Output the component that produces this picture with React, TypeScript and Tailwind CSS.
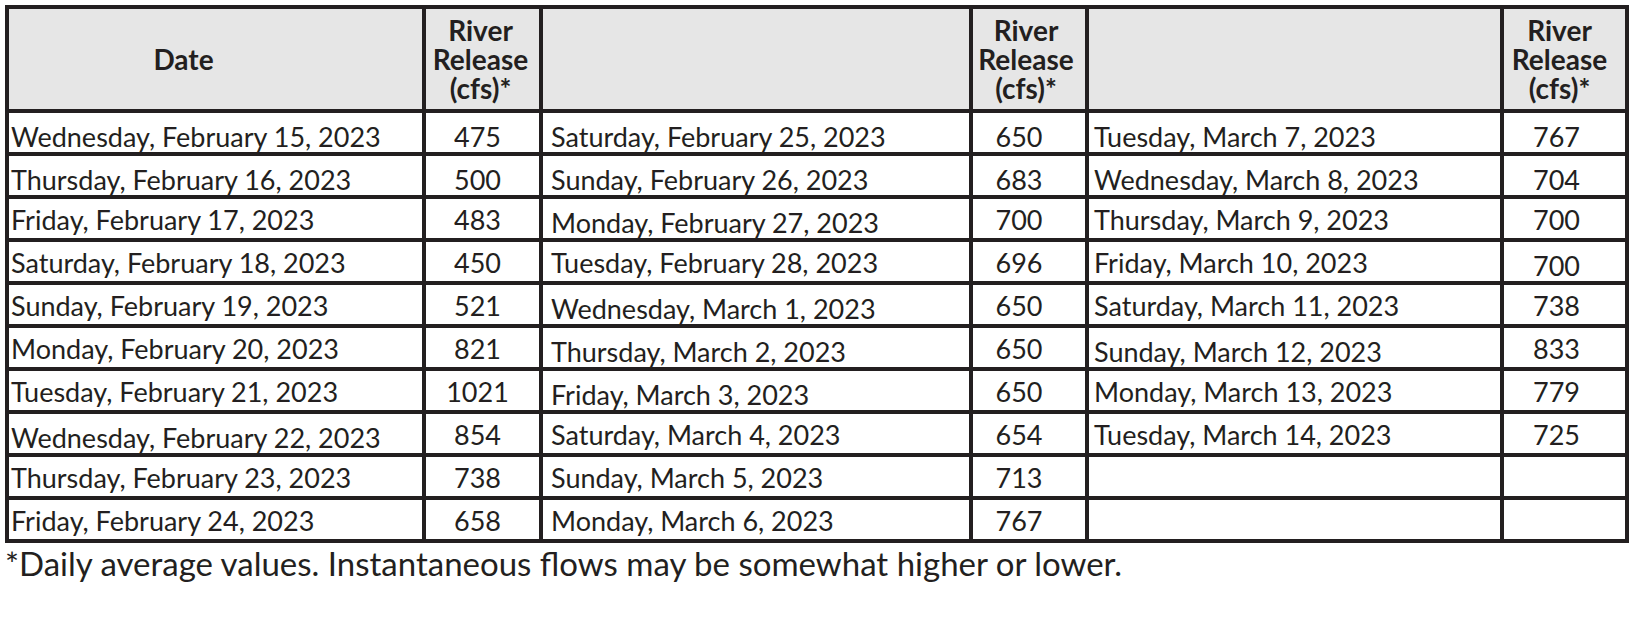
import React from "react";

// o: how many px lower than normal the text sits (0, 3 or 6)
type Cell = { d: string; v: string; od?: number; ov?: number };

const rows: { off: number; cells: Cell[] }[] = [
  {
    off: 3,
    cells: [
      { d: "Wednesday, February 15, 2023", v: "475" },
      { d: "Saturday, February 25, 2023", v: "650" },
      { d: "Tuesday, March 7, 2023", v: "767" },
    ],
  },
  {
    off: 3,
    cells: [
      { d: "Thursday, February 16, 2023", v: "500" },
      { d: "Sunday, February 26, 2023", v: "683" },
      { d: "Wednesday, March 8, 2023", v: "704" },
    ],
  },
  {
    off: 0,
    cells: [
      { d: "Friday, February 17, 2023", v: "483" },
      { d: "Monday, February 27, 2023", v: "700", od: 3 },
      { d: "Thursday, March 9, 2023", v: "700" },
    ],
  },
  {
    off: 0,
    cells: [
      { d: "Saturday, February 18, 2023", v: "450" },
      { d: "Tuesday, February 28, 2023", v: "696" },
      { d: "Friday, March 10, 2023", v: "700", ov: 3 },
    ],
  },
  {
    off: 0,
    cells: [
      { d: "Sunday, February 19, 2023", v: "521" },
      { d: "Wednesday, March 1, 2023", v: "650", od: 3 },
      { d: "Saturday, March 11, 2023", v: "738" },
    ],
  },
  {
    off: 0,
    cells: [
      { d: "Monday, February 20, 2023", v: "821" },
      { d: "Thursday, March 2, 2023", v: "650", od: 3 },
      { d: "Sunday, March 12, 2023", v: "833", od: 3 },
    ],
  },
  {
    off: 0,
    cells: [
      { d: "Tuesday, February 21, 2023", v: "1021" },
      { d: "Friday, March 3, 2023", v: "650", od: 3 },
      { d: "Monday, March 13, 2023", v: "779" },
    ],
  },
  {
    off: 0,
    cells: [
      { d: "Wednesday, February 22, 2023", v: "854", od: 3 },
      { d: "Saturday, March 4, 2023", v: "654" },
      { d: "Tuesday, March 14, 2023", v: "725" },
    ],
  },
  {
    off: 0,
    cells: [
      { d: "Thursday, February 23, 2023", v: "738" },
      { d: "Sunday, March 5, 2023", v: "713" },
      { d: "", v: "" },
    ],
  },
  {
    off: 0,
    cells: [
      { d: "Friday, February 24, 2023", v: "658" },
      { d: "Monday, March 6, 2023", v: "767" },
      { d: "", v: "" },
    ],
  },
];

const padFor: Record<number, string> = {
  0: "pb-[6px]",
  3: "pb-[3px]",
  6: "pb-[0px]",
};

const border = "border-[4px] border-[#231f20]";
const datePad = ["pl-[2px]", "pl-[8px]", "pl-[5px]"];
const valPad = ["pr-[10px]", "pr-[20px]", "pr-[16px]"];

function RR({ pad }: { pad: string }) {
  return (
    <div className={`flex flex-col items-center leading-[29px] font-bold text-[28px] ${pad}`}>
      <span>River</span>
      <span>Release</span>
      <span>(cfs)*</span>
    </div>
  );
}

export default function App() {
  return (
    <div
      className="w-[1633px] h-[617px] bg-white text-[#231f20] pt-[5px] pl-[5px]"
      style={{ fontFamily: "Lato, 'Liberation Sans', sans-serif" }}
    >
      <table className="border-collapse table-fixed w-[1620px] border-[4px] border-[#231f20]">
        <colgroup>
          <col className="w-[417px]" />
          <col className="w-[117px]" />
          <col className="w-[430px]" />
          <col className="w-[116px]" />
          <col className="w-[415px]" />
          <col className="w-[125px]" />
        </colgroup>
        <thead>
          <tr className="h-[104px] bg-[#e6e6e6]">
            <th className={`${border} text-[28px] font-bold pr-[64px]`}>Date</th>
            <th className={border}>
              <RR pad="pr-[4px]" />
            </th>
            <th className={border}></th>
            <th className={border}>
              <RR pad="pr-[6px]" />
            </th>
            <th className={border}></th>
            <th className={border}>
              <RR pad="pr-[10px]" />
            </th>
          </tr>
        </thead>
        <tbody>
          {rows.map((r, i) => (
            <tr key={i} className="h-[43px]">
              {r.cells.map((c, j) => (
                <React.Fragment key={j}>
                  <td
                    className={`${border} text-[27px] leading-[24px] align-bottom whitespace-nowrap ${datePad[j]} ${padFor[Math.min(6, r.off + (c.od ?? 0))]}`}
                  >
                    {c.d}
                  </td>
                  <td
                    className={`${border} text-[27px] leading-[24px] text-center align-bottom ${valPad[j]} ${padFor[Math.min(6, r.off + (c.ov ?? 0))]}`}
                  >
                    {c.v}
                  </td>
                </React.Fragment>
              ))}
            </tr>
          ))}
        </tbody>
      </table>
      <div className="text-[33px] leading-[40px] mt-[0px]">
        *Daily average values. Instantaneous flows may be somewhat higher or lower.
      </div>
    </div>
  );
}
